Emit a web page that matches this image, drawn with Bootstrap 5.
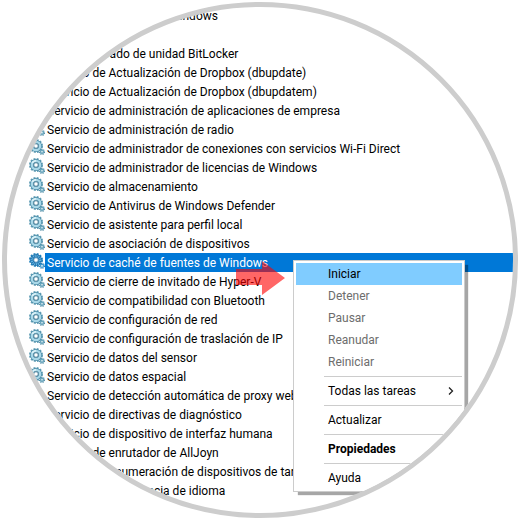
<!DOCTYPE html>
<html lang="es">
<head>
<meta charset="utf-8">
<meta name="viewport" content="width=device-width, initial-scale=1">
<title>Servicios</title>
<link href="https://cdn.jsdelivr.net/npm/bootstrap@5.3.0/dist/css/bootstrap.min.css" rel="stylesheet">
<style>
  body { font-family: Roboto, "Open Sans", sans-serif; font-size: 12px; line-height: 19px; color: #000; background: #fff; padding: 2px; }
  .lens { aspect-ratio: 1; border: 5px solid #cdcdcd; border-radius: 50%; }
  .services { padding-left: 22px; margin-top: -1px; }
  .service { height: 19px; }
  .service .gears { width: 16px; height: 16px; flex: none; }
  .service-name { padding: 1px 2px 0; line-height: 18px; font-size: 12px; color: #000; white-space: nowrap; }
  .service.chosen .service-name { background: #0078d7; color: #fff; }
  .context { top: 7px; left: 264px; width: 172px; padding: 2px; border: 1px solid #ccc; z-index: 2; box-shadow: 4px 4px 1px -1px rgba(0, 0, 0, .35); }
  .context .dropdown-item { height: 22px; padding: 0 8px 0 32px; font-size: 12px; line-height: 22px; color: #000; }
  .context .dropdown-item:disabled { color: #6d6d6d; }
  .context .dropdown-item.current { background: #80ccff; }
  .context .dropdown-divider { margin: 3px 0 3px 28px; border-color: #ccc; }
  .pointer { left: 207px; top: 8px; width: 49px; height: 34px; z-index: 1; pointer-events: none; }
</style>
</head>
<body>
<svg class="d-none" aria-hidden="true">
  <symbol id="gears" viewBox="0 0 16 16">
    <circle cx="7" cy="7" r="6" fill="none" stroke="#5f9cb4" stroke-width="2" stroke-dasharray="1.9 1.24"/>
    <circle cx="7" cy="7" r="4.2" fill="none" stroke="#4b8ca8" stroke-width="3.6"/>
    <circle cx="7" cy="7" r="4.2" fill="none" stroke="#a9d8e8" stroke-width="2.3"/>
    <path d="M3.2 5.2A4.2 4.2 0 0 1 7 2.8" fill="none" stroke="#dcf2f8" stroke-width="1.6"/>
    <circle cx="7" cy="7" r="2.3" fill="#fff" stroke="#4a7f98" stroke-width="1"/>
    <circle cx="13" cy="12.8" r="2.4" fill="none" stroke="#4f8aa3" stroke-width="1.4" stroke-dasharray="1.1 .8"/>
    <circle cx="13" cy="12.8" r="1.5" fill="#fff" stroke="#6aa6bd" stroke-width="1.5"/>
  </symbol>
  <symbol id="gears-chosen" viewBox="0 0 16 16">
    <circle cx="7" cy="7" r="6" fill="none" stroke="#2383bd" stroke-width="2" stroke-dasharray="1.9 1.24"/>
    <circle cx="7" cy="7" r="4.2" fill="none" stroke="#1f6fa8" stroke-width="3.6"/>
    <circle cx="7" cy="7" r="4.2" fill="none" stroke="#63b4e2" stroke-width="2.4" stroke-dasharray="1 .8"/>
    <circle cx="7" cy="7" r="2.3" fill="#fff" stroke="#2c78ac" stroke-width=".8"/>
    <circle cx="13" cy="12.8" r="2.4" fill="none" stroke="#1c6fa8" stroke-width="1.2" stroke-dasharray="1.1 .8"/>
    <circle cx="13" cy="12.8" r="1.5" fill="#fff" stroke="#3f9bd0" stroke-width="1.3"/>
  </symbol>
</svg>
<main class="lens w-100 overflow-hidden">
  <ul class="services list-unstyled mb-0">
    <li class="service d-flex"><svg class="gears" aria-hidden="true"><use href="#gears"/></svg><button class="service-name btn border-0 rounded-0">Servicio biométrico de Windows</button></li>
    <li class="service d-flex"></li>
    <li class="service d-flex"><svg class="gears" aria-hidden="true"><use href="#gears"/></svg><button class="service-name btn border-0 rounded-0">Servicio cifrado de unidad BitLocker</button></li>
    <li class="service d-flex"><svg class="gears" aria-hidden="true"><use href="#gears"/></svg><button class="service-name btn border-0 rounded-0">Servicio de Actualización de Dropbox (dbupdate)</button></li>
    <li class="service d-flex"><svg class="gears" aria-hidden="true"><use href="#gears"/></svg><button class="service-name btn border-0 rounded-0">Servicio de Actualización de Dropbox (dbupdatem)</button></li>
    <li class="service d-flex"><svg class="gears" aria-hidden="true"><use href="#gears"/></svg><button class="service-name btn border-0 rounded-0">Servicio de administración de aplicaciones de empresa</button></li>
    <li class="service d-flex"><svg class="gears" aria-hidden="true"><use href="#gears"/></svg><button class="service-name btn border-0 rounded-0">Servicio de administración de radio</button></li>
    <li class="service d-flex"><svg class="gears" aria-hidden="true"><use href="#gears"/></svg><button class="service-name btn border-0 rounded-0">Servicio de administrador de conexiones con servicios Wi-Fi Direct</button></li>
    <li class="service d-flex"><svg class="gears" aria-hidden="true"><use href="#gears"/></svg><button class="service-name btn border-0 rounded-0">Servicio de administrador de licencias de Windows</button></li>
    <li class="service d-flex"><svg class="gears" aria-hidden="true"><use href="#gears"/></svg><button class="service-name btn border-0 rounded-0">Servicio de almacenamiento</button></li>
    <li class="service d-flex"><svg class="gears" aria-hidden="true"><use href="#gears"/></svg><button class="service-name btn border-0 rounded-0">Servicio de Antivirus de Windows Defender</button></li>
    <li class="service d-flex"><svg class="gears" aria-hidden="true"><use href="#gears"/></svg><button class="service-name btn border-0 rounded-0">Servicio de asistente para perfil local</button></li>
    <li class="service d-flex"><svg class="gears" aria-hidden="true"><use href="#gears"/></svg><button class="service-name btn border-0 rounded-0">Servicio de asociación de dispositivos</button></li>
    <li class="service chosen d-flex position-relative">
      <svg class="gears" aria-hidden="true"><use href="#gears-chosen"/></svg><button class="service-name btn border-0 rounded-0 flex-grow-1 text-start">Servicio de caché de fuentes de Windows</button>
      <svg class="pointer position-absolute" viewBox="0 0 49 34" aria-hidden="true"><path d="M0 8H26V0L49 17 26 34V24H0Z" fill="#f00" fill-opacity=".6"/></svg>
      <div class="context dropdown-menu show rounded-0">
        <button class="dropdown-item current">Iniciar</button>
        <button class="dropdown-item" disabled>Detener</button>
        <button class="dropdown-item" disabled>Pausar</button>
        <button class="dropdown-item" disabled>Reanudar</button>
        <button class="dropdown-item" disabled>Reiniciar</button>
        <hr class="dropdown-divider">
        <button class="dropdown-item d-flex align-items-center justify-content-between">Todas las tareas <svg viewBox="0 0 8 16" width="8" height="16" aria-hidden="true"><path d="M3 4.500l3.500 3.500-3.500 3.500" fill="none" stroke="#222" stroke-width="1.3"/></svg></button>
        <hr class="dropdown-divider">
        <button class="dropdown-item">Actualizar</button>
        <hr class="dropdown-divider">
        <button class="dropdown-item fw-bold">Propiedades</button>
        <hr class="dropdown-divider">
        <button class="dropdown-item">Ayuda</button>
      </div>
    </li>
    <li class="service d-flex"><svg class="gears" aria-hidden="true"><use href="#gears"/></svg><button class="service-name btn border-0 rounded-0">Servicio de cierre de invitado de Hyper-V</button></li>
    <li class="service d-flex"><svg class="gears" aria-hidden="true"><use href="#gears"/></svg><button class="service-name btn border-0 rounded-0">Servicio de compatibilidad con Bluetooth</button></li>
    <li class="service d-flex"><svg class="gears" aria-hidden="true"><use href="#gears"/></svg><button class="service-name btn border-0 rounded-0">Servicio de configuración de red</button></li>
    <li class="service d-flex"><svg class="gears" aria-hidden="true"><use href="#gears"/></svg><button class="service-name btn border-0 rounded-0">Servicio de configuración de traslación de IP</button></li>
    <li class="service d-flex"><svg class="gears" aria-hidden="true"><use href="#gears"/></svg><button class="service-name btn border-0 rounded-0">Servicio de datos del sensor</button></li>
    <li class="service d-flex"><svg class="gears" aria-hidden="true"><use href="#gears"/></svg><button class="service-name btn border-0 rounded-0">Servicio de datos espacial</button></li>
    <li class="service d-flex"><svg class="gears" aria-hidden="true"><use href="#gears"/></svg><button class="service-name btn border-0 rounded-0">Servicio de detección automática de proxy web</button></li>
    <li class="service d-flex"><svg class="gears" aria-hidden="true"><use href="#gears"/></svg><button class="service-name btn border-0 rounded-0">Servicio de directivas de diagnóstico</button></li>
    <li class="service d-flex"><svg class="gears" aria-hidden="true"><use href="#gears"/></svg><button class="service-name btn border-0 rounded-0">Servicio de dispositivo de interfaz humana</button></li>
    <li class="service d-flex"><svg class="gears" aria-hidden="true"><use href="#gears"/></svg><button class="service-name btn border-0 rounded-0">Servicio de enrutador de AllJoyn</button></li>
    <li class="service d-flex"><svg class="gears" aria-hidden="true"><use href="#gears"/></svg><button class="service-name btn border-0 rounded-0">Servicio de enumeración de dispositivos de tarjeta</button></li>
    <li class="service d-flex"><svg class="gears" aria-hidden="true"><use href="#gears"/></svg><button class="service-name btn border-0 rounded-0">Servicio de experiencia de idioma</button></li>
  </ul>
</main>
<script src="https://cdn.jsdelivr.net/npm/bootstrap@5.3.0/dist/js/bootstrap.bundle.min.js"></script>
</body>
</html>
